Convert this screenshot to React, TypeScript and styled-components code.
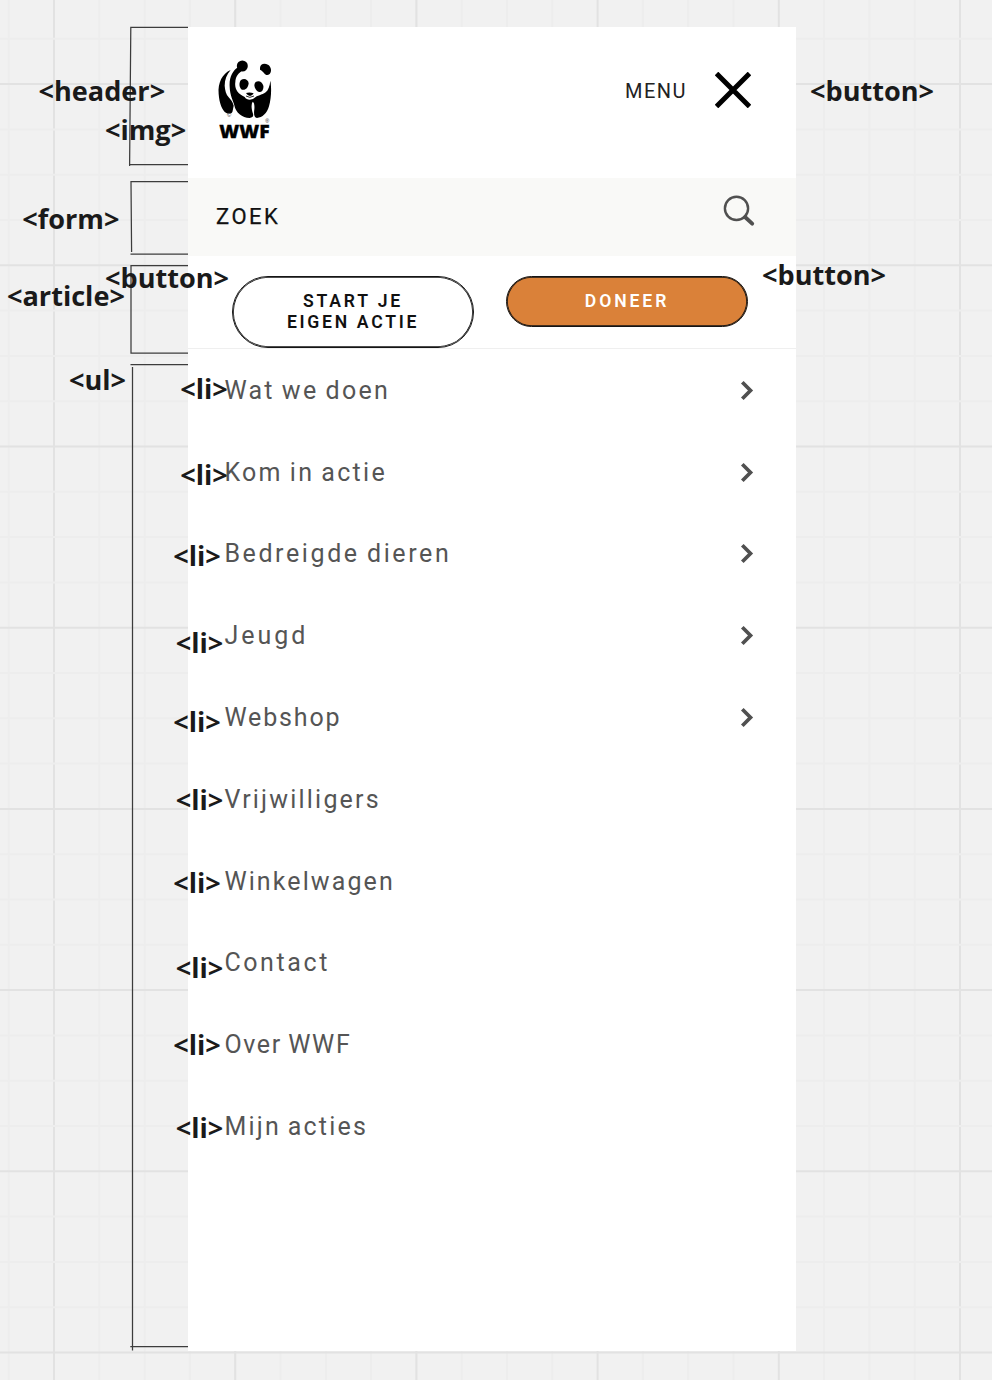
import React from "react";
import styled, { createGlobalStyle } from "styled-components";

const GlobalStyle = createGlobalStyle`
  *, *::before, *::after { box-sizing: border-box; }
  body { margin: 0; background: #f1f1f1; }
`;

const Board = styled.div`
  position: relative;
  width: 992px;
  height: 1380px;
  overflow: hidden;
  padding: 27px 196px 29px 188px;
  background: #f1f1f1;
  font-family: Roboto, "Liberation Sans", sans-serif;
`;

const Layer = styled.svg`
  position: absolute;
  inset: 0;
  pointer-events: none;
`;

const Phone = styled.div`
  position: relative;
  display: flex;
  flex-direction: column;
  width: 608px;
  height: 1324px;
  background: #fff;
`;

const Header = styled.header`
  display: flex;
  align-items: flex-start;
  justify-content: space-between;
  height: 151px;
  padding: 18px 45px 0 12px;
`;

const MenuButton = styled.button`
  display: flex;
  align-items: center;
  gap: 28px;
  margin-top: 26px;
  padding: 0;
  border: 0;
  background: none;
  color: #222;
  font: 400 20px/36px Roboto, sans-serif;
  letter-spacing: 1.5px;
`;

const MenuText = styled.span`
  padding-top: 2px;
`;

const SearchForm = styled.form`
  display: flex;
  align-items: flex-start;
  justify-content: space-between;
  height: 78px;
  padding: 16px 40px 0 28px;
  background: #f9f9f7;
`;

const SearchLabel = styled.label`
  color: #111;
  font-size: 22px;
  line-height: 45px;
  letter-spacing: 2.5px;
  -webkit-text-stroke: 0.25px #111;
`;

const Actions = styled.article`
  display: flex;
  align-items: flex-start;
  justify-content: space-between;
  height: 93px;
  padding: 20px 48px 0 44px;
  border-bottom: 1px solid #efefef;
`;

const Pill = styled.button<{ $filled?: boolean }>`
  width: 242px;
  height: ${(p) => (p.$filled ? 51 : 72)}px;
  flex: none;
  padding: 0;
  border: 1px solid #151515;
  border-radius: 36px;
  box-shadow: inset 0 0 0 0.8px #151515;
  background: ${(p) => (p.$filled ? "#da8139" : "#fff")};
  color: ${(p) => (p.$filled ? "#fff" : "#111")};
  font: 600 17.6px/21.5px Roboto, sans-serif;
`;

const PillLine = styled.span<{ $spacing: number }>`
  display: block;
  letter-spacing: ${(p) => p.$spacing}px;
`;

const NavList = styled.ul`
  margin: 0;
  padding: 0.9px 42px 0 36.4px;
  list-style: none;
`;

const NavItem = styled.li<{ $spacing: number }>`
  display: flex;
  align-items: center;
  justify-content: space-between;
  height: 81.8px;
  color: #555;
  font-size: 25px;
  line-height: 30px;
  letter-spacing: ${(p) => p.$spacing}px;
  word-spacing: -1.5px;
  white-space: nowrap;
`;

const Tag = styled.span<{ $x: number; $baseline: number }>`
  position: absolute;
  left: ${(p) => p.$x - 1}px;
  top: ${(p) => p.$baseline - 23.7}px;
  color: #1a1a1a;
  font: 700 27.1px/28px "Open Sans", "Noto Sans", sans-serif;
  white-space: nowrap;
`;

const items = [
  { text: "Wat we doen", spacing: 2.3, arrow: true },
  { text: "Kom in actie", spacing: 2.3, arrow: true },
  { text: "Bedreigde dieren", spacing: 2.6, arrow: true },
  { text: "Jeugd", spacing: 3, arrow: true },
  { text: "Webshop", spacing: 1.85, arrow: true },
  { text: "Vrijwilligers", spacing: 2.2 },
  { text: "Winkelwagen", spacing: 2.1 },
  { text: "Contact", spacing: 2.6 },
  { text: "Over WWF", spacing: 1.65 },
  { text: "Mijn acties", spacing: 2.2 },
];

const tags: [string, number, number][] = [
  ["header", 39.5, 101],
  ["img", 106, 140],
  ["form", 23.3, 229],
  ["button", 106, 287.6],
  ["article", 8, 305.6],
  ["ul", 70, 390],
  ["button", 811, 101],
  ["button", 763, 284.6],
  ["li", 181.2, 399],
  ["li", 181.2, 484.7],
  ["li", 174.2, 566],
  ["li", 176.7, 652.5],
  ["li", 174.2, 732],
  ["li", 176.7, 809.5],
  ["li", 174.2, 893],
  ["li", 176.7, 977.5],
  ["li", 174.2, 1055],
  ["li", 176.7, 1138],
];

const STEP = 45.3;

const Grid = () => (
  <Layer width="992" height="1380">
    {Array.from({ length: 22 }, (_, i) => (
      <line key={`x${i}`} x1={8.7 + i * STEP} x2={8.7 + i * STEP} y1="0" y2="1380"
        stroke={i % 4 === 1 ? "#e2e2e2" : "#ededed"} strokeWidth="2" />
    ))}
    {Array.from({ length: 30 }, (_, i) => (
      <line key={`y${i}`} y1={38.8 + i * STEP} y2={38.8 + i * STEP} x1="0" x2="992"
        stroke={i % 4 === 1 ? "#e2e2e2" : "#ededed"} strokeWidth="2" />
    ))}
  </Layer>
);

const Brackets = () => (
  <Layer width="992" height="1380" fill="none" stroke="#3c3c3c" strokeWidth="1.25">
    <path d="M188 27.3H130.8L129.6 166M129.6 164.5H188" />
    <path d="M188 181.6H131L131.6 252M130.5 254H188" />
    <path d="M188 265.5H131V353H188" />
    <path d="M130.5 364.6H188M132.5 367V1350.5M130.3 1346.6H188" />
  </Layer>
);

const Panda = () => (
  <svg width="90" height="110" viewBox="0 0 270 330" role="img" aria-label="WWF">
    <path d="M92 75C67 86 53 113 56 147C58 174 66 197 79 204C88 208 98 205 98 197L101 182C98 171 92 163 86 157C78 148 75 136 74 122C74 104 80 88 92 75Z" />
    <path d="M114 67C98 77 87 98 89 125C90 153 99 164 103 181C107 203 126 219 149 219C158 218 161 214 159 206C154 191 153 178 158 170C163 172 164 182 163 193C161 207 162 218 171 219C187 218 201 205 207 184C214 160 215 128 211 107C209 124 205 135 197 142C185 151 173 150 162 160C151 168 139 164 134 156C113 147 103 132 106 111C107 97 112 88 124 79Z" />
    <circle cx="127" cy="63" r="16.5" />
    <path d="M180 68C181 56 193 53 204 59C214 65 216 79 209 87C203 92 197 91 192 84C188 79 184 76 180 74Z" />
    <path d="M123 105C132 98 145 103 146 115C145 128 136 137 126 134C117 129 116 113 123 105Z" />
    <path d="M167 111C177 105 187 111 190 122C192 134 185 142 178 141C167 138 158 120 167 111Z" />
    <path d="M138 144Q149 140 161 145Q158 152 150 153Q142 151 138 144Z" />
    <path d="M138 153Q149 161 162 153" fill="none" stroke="#000" strokeWidth="2.5" />
    <text x="81" y="217" fontFamily="Liberation Sans, sans-serif" fontSize="17" fill="#222">©</text>
    <text x="196" y="233" fontFamily="Liberation Sans, sans-serif" fontSize="16" fill="#222">®</text>
    <text x="58" y="280" fontFamily="Open Sans, sans-serif" fontWeight="800" fontSize="55"
      textLength="151" lengthAdjust="spacingAndGlyphs" stroke="#000" strokeWidth="1">WWF</text>
  </svg>
);

const Cross = () => (
  <svg width="36" height="36" viewBox="0 0 36 36" fill="none" stroke="#000" strokeWidth="5">
    <path d="M1.5 1.5L34.5 34.5M34.5 1.5L1.5 34.5" />
  </svg>
);

const SearchIcon = () => (
  <svg width="34" height="34" viewBox="0 0 34 34" fill="none" stroke="#505050" strokeLinecap="round">
    <circle cx="14.5" cy="14.4" r="11.6" strokeWidth="2.4" />
    <path d="M23 23L30.2 29.6" strokeWidth="3.9" />
  </svg>
);

const Chevron = () => (
  <svg width="14" height="20" viewBox="0 0 14 20" fill="none" stroke="#505050" strokeWidth="3.7">
    <path d="M2.3 1.3L10.5 9.5L2.3 17.7" />
  </svg>
);

export default function App() {
  return (
    <Board>
      <GlobalStyle />
      <Grid />
      <Phone>
        <Header>
          <Panda />
          <MenuButton>
            <MenuText>MENU</MenuText>
            <Cross />
          </MenuButton>
        </Header>
        <SearchForm>
          <SearchLabel>ZOEK</SearchLabel>
          <SearchIcon />
        </SearchForm>
        <Actions>
          <Pill>
            <PillLine $spacing={2.8}>START JE</PillLine>
            <PillLine $spacing={2.7}>EIGEN ACTIE</PillLine>
          </Pill>
          <Pill $filled>
            <PillLine $spacing={2.9}>DONEER</PillLine>
          </Pill>
        </Actions>
        <NavList>
          {items.map((item) => (
            <NavItem key={item.text} $spacing={item.spacing}>
              {item.text}
              {item.arrow && <Chevron />}
            </NavItem>
          ))}
        </NavList>
      </Phone>
      <Brackets />
      {tags.map(([name, x, baseline]) => (
        <Tag key={`${x}-${baseline}`} $x={x} $baseline={baseline}>{`<${name}>`}</Tag>
      ))}
    </Board>
  );
}
